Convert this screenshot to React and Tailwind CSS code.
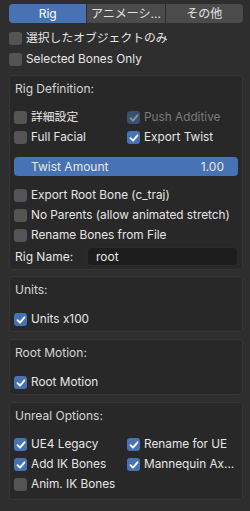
import React from "react";

const font = { fontFamily: "Inter, 'Noto Sans CJK JP', sans-serif" };

function Check({ on, dim }) {
    let bg = "bg-[#545454]";
    if (on) bg = dim ? "bg-[#3a4f70]" : "bg-[#4772b3]";
    return (
        <span className={`w-[13px] h-[13px] rounded-[3px] shrink-0 flex items-center justify-center ${bg}`}>
            {on && (
                <svg width="10" height="10" viewBox="0 0 10 10">
                    <path
                        d="M1.5 5.2 L4 7.7 L8.5 2.3"
                        fill="none"
                        stroke={dim ? "#8a93a3" : "#ffffff"}
                        strokeWidth="1.9"
                        strokeLinecap="round"
                        strokeLinejoin="round"
                    />
                </svg>
            )}
        </span>
    );
}

function Row({ label, on, dim, className = "" }) {
    return (
        <div className={`flex items-center h-[13px] gap-[4px] ${className}`}>
            <Check on={on} dim={dim} />
            <span className={`text-[11.8px] leading-[13px] whitespace-nowrap ${dim ? "text-[#7a7a7a]" : "text-[#e6e6e6]"}`}>
                {label}
            </span>
        </div>
    );
}

function Panel({ title, children, className = "" }) {
    return (
        <div className={`border border-[#363636] bg-[#282828] rounded-[4px] px-[4px] ${className}`}>
            <div className="mt-[6px] h-[14px] leading-[14px] text-[12px] text-[#d6d6d6] pl-[1px]">{title}</div>
            {children}
        </div>
    );
}

export default function App() {
    return (
        <div style={font} className="w-[250px] h-[511px] bg-[#2e2e2e] pl-[9px] pr-[7px] pt-[4px] overflow-hidden">
            <div className="flex h-[19px] gap-[1px] rounded-[4px] overflow-hidden text-[12px]">
                <div className="flex-1 bg-[#4772b3] text-white flex items-center justify-center">Rig</div>
                <div className="flex-1 bg-[#4b4b4b] text-[#e2e2e2] flex items-center justify-center">アニメーシ...</div>
                <div className="flex-1 bg-[#4b4b4b] text-[#e2e2e2] flex items-center justify-center">その他</div>
            </div>

            <Row label="選択したオブジェクトのみ" className="mt-[9px]" />
            <Row label="Selected Bones Only" className="mt-[8px]" />

            <Panel title="Rig Definition:" className="mt-[9px] pb-[3px]">
                <div className="grid grid-cols-[113px_1fr] mt-[15px] gap-y-[7px]">
                    <Row label="詳細設定" />
                    <Row label="Push Additive" on dim />
                    <Row label="Full Facial" />
                    <Row label="Export Twist" on />
                </div>
                <div className="mt-[13px] h-[19px] rounded-[4px] bg-[#4772b3] flex items-center justify-between pl-[17px] pr-[14px] text-[12px] text-[#e8e8e8]">
                    <span>Twist Amount</span>
                    <span>1.00</span>
                </div>
                <div className="flex flex-col gap-[7px] mt-[13px]">
                    <Row label="Export Root Bone (c_traj)" />
                    <Row label="No Parents (allow animated stretch)" />
                    <Row label="Rename Bones from File" />
                </div>
                <div className="flex items-center mt-[5px] h-[19px]">
                    <span className="w-[73px] pl-[1px] text-[12px] text-[#e6e6e6]">Rig Name:</span>
                    <div className="flex-1 h-[19px] rounded-[4px] bg-[#1d1d1d] border border-[#2b2b2b] flex items-center pl-[8px] text-[12px] text-[#e6e6e6]">
                        root
                    </div>
                </div>
            </Panel>

            <Panel title="Units:" className="mt-[6px] pb-[5px]">
                <Row label="Units x100" on className="mt-[16px]" />
            </Panel>

            <Panel title="Root Motion:" className="mt-[7px] pb-[5px]">
                <Row label="Root Motion" on className="mt-[16px]" />
            </Panel>

            <Panel title="Unreal Options:" className="mt-[7px] pb-[8px]">
                <div className="grid grid-cols-[113px_1fr] mt-[15px] gap-y-[7px]">
                    <Row label="UE4 Legacy" on />
                    <Row label="Rename for UE" on />
                    <Row label="Add IK Bones" on />
                    <Row label="Mannequin Ax..." on />
                    <Row label="Anim. IK Bones" />
                </div>
            </Panel>
        </div>
    );
}
